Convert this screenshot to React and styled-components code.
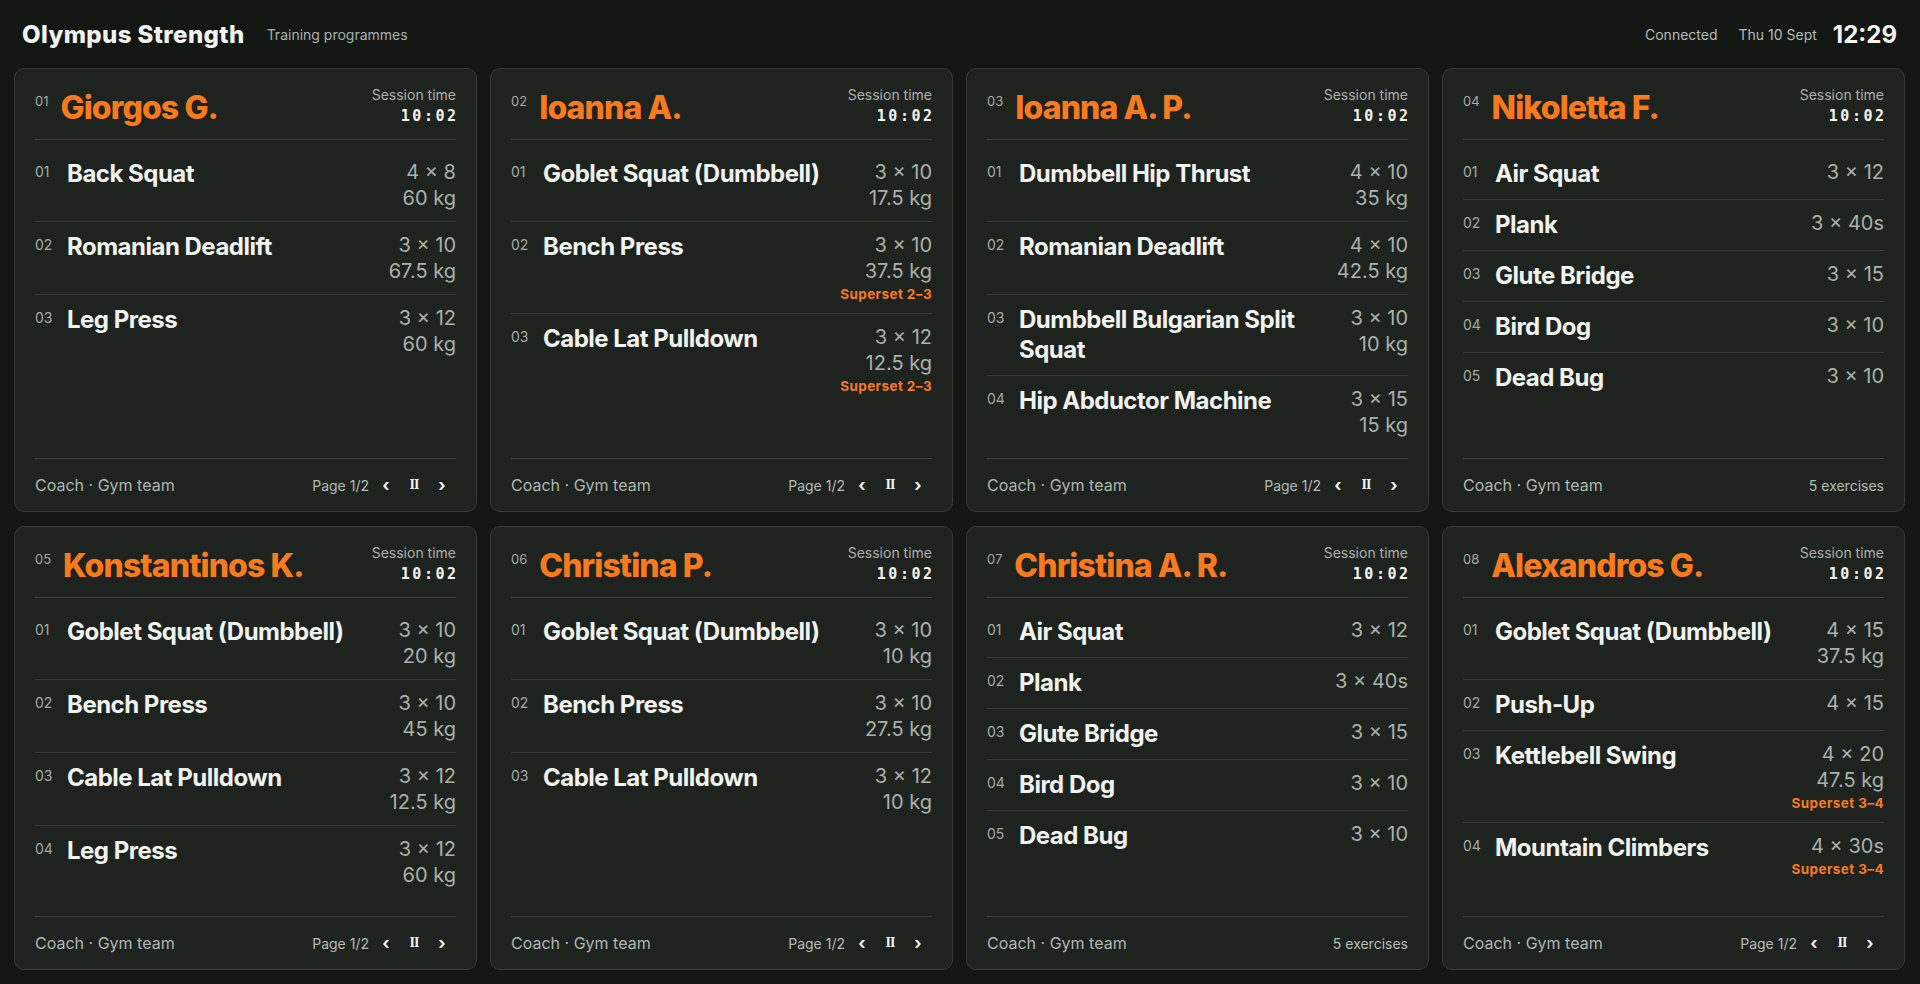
import styled, { createGlobalStyle } from 'styled-components';

const GlobalStyle = createGlobalStyle`
  html, body {
    margin: 0;
    padding: 0;
    height: 100%;
    background: #131714;
  }
  body {
    font-family: Inter, "Noto Sans", "Liberation Sans", sans-serif;
    color: #f2f4f1;
    -webkit-font-smoothing: antialiased;
  }
  * { box-sizing: border-box; }
`;

const clients = [
  {
    name: 'Giorgos G.',
    footer: 'pages',
    exercises: [
      { name: 'Back Squat', sets: '4 × 8', load: '60 kg' },
      { name: 'Romanian Deadlift', sets: '3 × 10', load: '67.5 kg' },
      { name: 'Leg Press', sets: '3 × 12', load: '60 kg' },
    ],
  },
  {
    name: 'Ioanna A.',
    footer: 'pages',
    exercises: [
      { name: 'Goblet Squat (Dumbbell)', sets: '3 × 10', load: '17.5 kg' },
      { name: 'Bench Press', sets: '3 × 10', load: '37.5 kg', superset: 'Superset 2–3' },
      { name: 'Cable Lat Pulldown', sets: '3 × 12', load: '12.5 kg', superset: 'Superset 2–3' },
    ],
  },
  {
    name: 'Ioanna A. P.',
    footer: 'pages',
    exercises: [
      { name: 'Dumbbell Hip Thrust', sets: '4 × 10', load: '35 kg' },
      { name: 'Romanian Deadlift', sets: '4 × 10', load: '42.5 kg' },
      { name: 'Dumbbell Bulgarian Split Squat', sets: '3 × 10', load: '10 kg' },
      { name: 'Hip Abductor Machine', sets: '3 × 15', load: '15 kg' },
    ],
  },
  {
    name: 'Nikoletta F.',
    footer: 'count',
    exercises: [
      { name: 'Air Squat', sets: '3 × 12' },
      { name: 'Plank', sets: '3 × 40s' },
      { name: 'Glute Bridge', sets: '3 × 15' },
      { name: 'Bird Dog', sets: '3 × 10' },
      { name: 'Dead Bug', sets: '3 × 10' },
    ],
  },
  {
    name: 'Konstantinos K.',
    footer: 'pages',
    exercises: [
      { name: 'Goblet Squat (Dumbbell)', sets: '3 × 10', load: '20 kg' },
      { name: 'Bench Press', sets: '3 × 10', load: '45 kg' },
      { name: 'Cable Lat Pulldown', sets: '3 × 12', load: '12.5 kg' },
      { name: 'Leg Press', sets: '3 × 12', load: '60 kg' },
    ],
  },
  {
    name: 'Christina P.',
    footer: 'pages',
    exercises: [
      { name: 'Goblet Squat (Dumbbell)', sets: '3 × 10', load: '10 kg' },
      { name: 'Bench Press', sets: '3 × 10', load: '27.5 kg' },
      { name: 'Cable Lat Pulldown', sets: '3 × 12', load: '10 kg' },
    ],
  },
  {
    name: 'Christina A. R.',
    footer: 'count',
    exercises: [
      { name: 'Air Squat', sets: '3 × 12' },
      { name: 'Plank', sets: '3 × 40s' },
      { name: 'Glute Bridge', sets: '3 × 15' },
      { name: 'Bird Dog', sets: '3 × 10' },
      { name: 'Dead Bug', sets: '3 × 10' },
    ],
  },
  {
    name: 'Alexandros G.',
    footer: 'pages',
    exercises: [
      { name: 'Goblet Squat (Dumbbell)', sets: '4 × 15', load: '37.5 kg' },
      { name: 'Push-Up', sets: '4 × 15' },
      { name: 'Kettlebell Swing', sets: '4 × 20', load: '47.5 kg', superset: 'Superset 3–4' },
      { name: 'Mountain Climbers', sets: '4 × 30s', superset: 'Superset 3–4' },
    ],
  },
];

const pad = (n) => String(n).padStart(2, '0');

const App = () => (
  <Page>
    <GlobalStyle />
    <TopBar>
      <Brand>
        <h1>Olympus Strength</h1>
        <span>Training programmes</span>
      </Brand>
      <Status>
        <span>Connected</span>
        <span>Thu 10 Sept</span>
        <Clock>12:29</Clock>
      </Status>
    </TopBar>
    <Grid>
      {clients.map((c, i) => (
        <Card key={c.name + i}>
          <CardHead>
            <Who>
              <Index>{pad(i + 1)}</Index>
              <Name>{c.name}</Name>
            </Who>
            <Timer>
              <span>Session time</span>
              <strong>10:02</strong>
            </Timer>
          </CardHead>
          <List>
            {c.exercises.map((e, j) => (
              <Row key={e.name + j}>
                <RowNum>{pad(j + 1)}</RowNum>
                <ExName>{e.name}</ExName>
                <Values>
                  <span>{e.sets}</span>
                  {e.load && <span>{e.load}</span>}
                  {e.superset && <Superset>{e.superset}</Superset>}
                </Values>
              </Row>
            ))}
          </List>
          <CardFoot>
            <span>Coach · Gym team</span>
            {c.footer === 'pages' ? (
              <Pager>
                <small>Page 1/2</small>
                <PagerBtn>‹</PagerBtn>
                <PagerBtn $pause>II</PagerBtn>
                <PagerBtn>›</PagerBtn>
              </Pager>
            ) : (
              <Count>{c.exercises.length} exercises</Count>
            )}
          </CardFoot>
        </Card>
      ))}
    </Grid>
  </Page>
);

export default App;

const Page = styled.div`
  display: flex;
  flex-direction: column;
  height: 100vh;
  padding: 0 15px 14px 14px;
`;

const TopBar = styled.header`
  display: flex;
  align-items: center;
  justify-content: space-between;
  height: 68px;
  flex: none;
  padding: 0 8px 0 8px;
`;

const Brand = styled.div`
  display: flex;
  align-items: center;
  gap: 22px;

  h1 {
    margin: 0;
    font-size: 24px;
    font-weight: 800;
    letter-spacing: 0.4px;
    color: #f3f4f2;
  }
  span {
    font-size: 14px;
    color: #a9b1ab;
    margin-top: 1px;
  }
`;

const Status = styled.div`
  display: flex;
  align-items: center;
  gap: 21px;
  font-size: 14px;
  color: #b4bcb6;
`;

const Clock = styled.span`
  font-size: 24px;
  font-weight: 700;
  color: #f5f6f4;
  margin-left: -5px;
`;

const Grid = styled.main`
  flex: 1;
  display: grid;
  grid-template-columns: repeat(4, 1fr);
  grid-template-rows: 1fr 1fr;
  gap: 14px 13px;
  min-height: 0;
`;

const Card = styled.section`
  display: flex;
  flex-direction: column;
  min-height: 0;
  background: #1f2320;
  border: 1px solid #363b37;
  border-radius: 10px;
  padding: 0 20px;
`;

const CardHead = styled.div`
  display: flex;
  justify-content: space-between;
  align-items: flex-start;
  padding: 17px 0 12px;
  border-bottom: 1px solid #3a3f3b;
`;

const Who = styled.div`
  display: flex;
  align-items: flex-start;
  gap: 12px;
`;

const Index = styled.span`
  font-size: 13px;
  line-height: 16px;
  margin-top: 7px;
  color: #a3aba5;
`;

const Name = styled.h2`
  margin: 3px 0 0;
  font-size: 32px;
  line-height: 38px;
  font-weight: 800;
  letter-spacing: -0.9px;
  color: #f77b1c;
`;

const Timer = styled.div`
  display: flex;
  flex-direction: column;
  align-items: flex-end;

  span {
    font-size: 14px;
    line-height: 18px;
    color: #a9b1ab;
  }
  strong {
    margin-top: 2px;
    font-family: "DejaVu Sans Mono", "Liberation Mono", monospace;
    font-size: 15px;
    line-height: 20px;
    font-weight: 700;
    letter-spacing: 2.5px;
    margin-right: -2.5px;
    color: #f5f6f4;
  }
`;

const List = styled.div`
  flex: 1;
  min-height: 0;
  overflow: hidden;
  padding-top: 9px;
`;

const Row = styled.div`
  display: flex;
  align-items: flex-start;
  gap: 14px;
  padding: 10px 0;

  & + & {
    border-top: 1px solid #363b37;
  }
`;

const RowNum = styled.span`
  flex: none;
  width: 18px;
  font-size: 14px;
  line-height: 18px;
  margin-top: 4px;
  color: #a3aba5;
`;

const ExName = styled.div`
  flex: 1;
  min-width: 0;
  font-size: 24px;
  line-height: 30px;
  font-weight: 700;
  letter-spacing: -0.5px;
  color: #f1f3f0;
`;

const Values = styled.div`
  flex: none;
  display: flex;
  flex-direction: column;
  align-items: flex-end;
  margin-left: 16px;
  font-size: 20px;
  line-height: 26px;
  color: #a9b1ab;
`;

const Superset = styled.span`
  margin-top: 1px;
  font-size: 13.5px;
  line-height: 18px;
  font-weight: 700;
  letter-spacing: 0.4px;
  color: #f77b1c;
`;

const CardFoot = styled.div`
  flex: none;
  display: flex;
  align-items: center;
  justify-content: space-between;
  height: 53px;
  border-top: 1px solid #3a3f3b;
  font-size: 16px;
  color: #aeb6b0;
`;

const Pager = styled.div`
  display: flex;
  align-items: center;

  small {
    font-size: 14px;
    color: #b4bcb6;
    margin-right: 3px;
  }
`;

const PagerBtn = styled.span`
  width: 28px;
  text-align: center;
  color: #f1f3f0;
  font-family: ${(p) => (p.$pause ? '"Liberation Serif", serif' : 'inherit')};
  font-size: ${(p) => (p.$pause ? '14px' : '17px')};
  font-weight: 700;
  letter-spacing: ${(p) => (p.$pause ? '-1px' : '0')};
`;

const Count = styled.span`
  font-size: 14px;
  color: #b4bcb6;
`;
